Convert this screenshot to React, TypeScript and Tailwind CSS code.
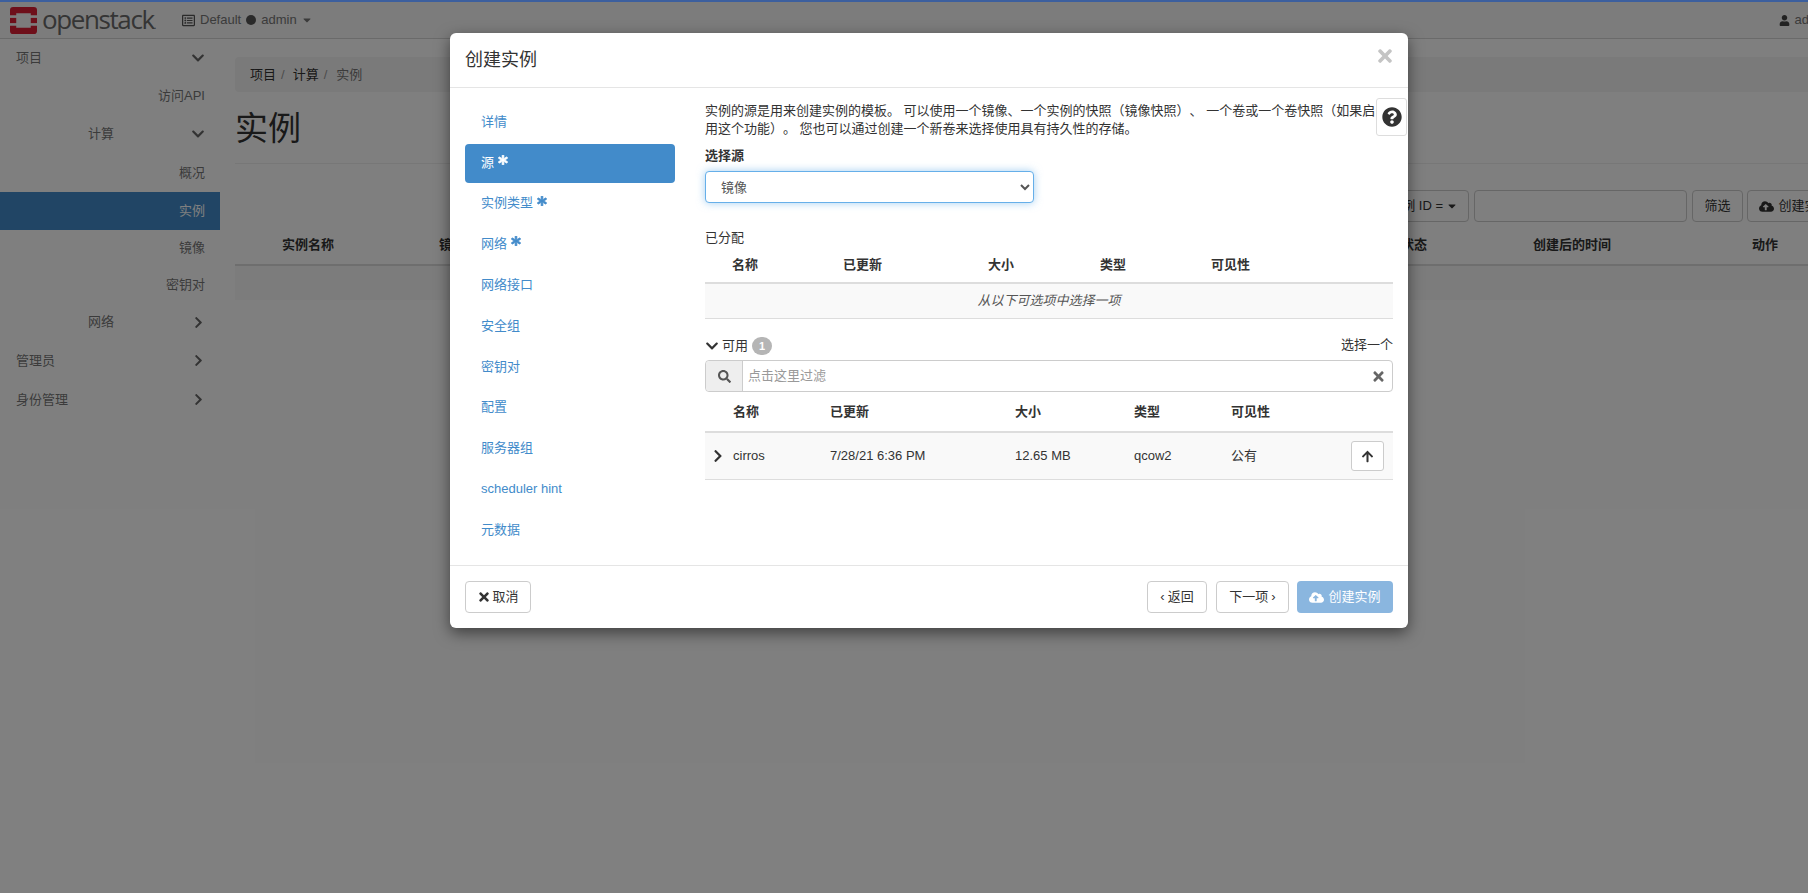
import React from 'react';
import {
  FaArrowUp,
  FaAsterisk,
  FaCaretDown,
  FaChevronDown,
  FaChevronRight,
  FaCloudUploadAlt,
  FaQuestionCircle,
  FaRegListAlt,
  FaSearch,
  FaTimes,
  FaUser,
} from 'react-icons/fa';

const Logo = () => (
  <svg viewBox="0 0 26 26" className="w-[27px] h-[27px] shrink-0" fill="#dc1e35">
    <path d="M0 8V3a3 3 0 0 1 3-3h20a3 3 0 0 1 3 3v5h-6V6H6v2z" />
    <path d="M0 18v5a3 3 0 0 0 3 3h20a3 3 0 0 0 3-3v-5h-6v2H6v-2z" />
    <rect x="0" y="10.5" width="6" height="5" />
    <rect x="20" y="10.5" width="6" height="5" />
  </svg>
);

const Navbar = () => (
  <div className="h-[37px] flex items-center bg-[#f8f8f8] border-b border-[#d4d4d4] text-[13px] text-[#777]">
    <div className="flex items-center pl-[10px] w-[182px] shrink-0">
      <Logo />
      <span className="ml-[5px] font-['Open_Sans',sans-serif] font-medium text-[26px] leading-none tracking-[-1.4px] text-[#6a6a6a] pb-[3px]">
        openstack<span className="text-[10px]">.</span>
      </span>
    </div>
    <FaRegListAlt className="text-[13px] text-[#555]" />
    <span className="ml-[5px]">Default</span>
    <span className="ml-[5px] w-[10px] h-[10px] rounded-full bg-[#555]" />
    <span className="ml-[5px]">admin</span>
    <FaCaretDown className="ml-[4px] text-[12px]" />
    <div className="ml-auto flex items-center gap-[5px] mr-[-4px]">
      <FaUser className="text-[11px] text-[#444]" />
      <span>admin</span>
      <FaCaretDown className="text-[12px]" />
    </div>
  </div>
);

const Sidebar = () => (
  <div className="w-[220px] shrink-0 text-[13px] text-[#777]">
    <div className="h-[38px] pl-4 pr-[15px] flex items-center justify-between">
      <span>项目</span>
      <FaChevronDown className="text-[14px] text-[#666]" />
    </div>
    <div className="h-[38px] pr-[15px] flex items-center justify-end">访问API</div>
    <div className="h-[38px] pl-[88px] pr-[15px] flex items-center justify-between">
      <span>计算</span>
      <FaChevronDown className="text-[14px] text-[#666]" />
    </div>
    <div className="h-[39px] pr-[15px] flex items-center justify-end">概况</div>
    <div className="h-[38px] pr-[15px] flex items-center justify-end bg-[#428bca] text-white">实例</div>
    <div className="h-[36px] pr-[15px] flex items-center justify-end">镜像</div>
    <div className="h-[37px] pr-[15px] flex items-center justify-end">密钥对</div>
    <div className="h-[38px] pl-[88px] pr-[15px] flex items-center justify-between">
      <span>网络</span>
      <FaChevronRight className="text-[13px] text-[#666]" />
    </div>
    <div className="h-[39px] pl-4 pr-[15px] flex items-center justify-between">
      <span>管理员</span>
      <FaChevronRight className="text-[13px] text-[#666]" />
    </div>
    <div className="h-[39px] pl-4 pr-[15px] flex items-center justify-between">
      <span>身份管理</span>
      <FaChevronRight className="text-[13px] text-[#666]" />
    </div>
  </div>
);

const PageContent = () => (
  <div className="flex-1 pl-[15px] text-[13px] text-[#333]">
    <div className="mt-[18px] h-[35px] pl-[15px] flex items-center bg-[#f5f5f5] rounded-[4px]">
      <span>项目</span>
      <span className="mx-[5px] text-[#999]">/</span>
      <span className="ml-[3px]">计算</span>
      <span className="mx-[5px] text-[#999]">/</span>
      <span className="ml-[4px] text-[#777]">实例</span>
    </div>
    <div className="h-[72px] pt-[2px] flex items-center border-b border-[#eee] text-[33px] leading-none">实例</div>
    <div className="mt-[26px] h-[32px] flex justify-end">
      <div className="w-[110px] flex items-center justify-end gap-[3px] pr-[10px] border border-[#ccc] rounded-[4px]">
        <span>实例 ID =</span>
        <FaCaretDown className="text-[12px]" />
      </div>
      <div className="ml-[5px] w-[213px] border border-[#ccc] rounded-[4px] bg-white" />
      <div className="ml-[5px] w-[51px] flex items-center justify-center border border-[#ccc] rounded-[4px]">筛选</div>
      <div className="ml-[4px] w-[96px] flex items-center justify-center gap-[4px] border border-[#ccc] rounded-[4px]">
        <FaCloudUploadAlt className="text-[15px]" />
        <span>创建实例</span>
      </div>
    </div>
    <div className="h-[44px] pt-[4px] grid grid-cols-[47px_157px_936px_158px_219px_1fr] items-center border-b-2 border-[#ddd] font-bold">
      <span />
      <span>实例名称</span>
      <span>镜像名称</span>
      <span>电源状态</span>
      <span>创建后的时间</span>
      <span>动作</span>
    </div>
    <div className="h-[34px] bg-[#f9f9f9]" />
  </div>
);

const steps = ['详情', '源', '实例类型', '网络', '网络接口', '安全组', '密钥对', '配置', '服务器组', 'scheduler hint', '元数据'];
const requiredSteps = ['源', '实例类型', '网络'];

const StepNav = () => (
  <div className="w-[210px] shrink-0 pt-[15px] flex flex-col gap-[1.8px] text-[13px]">
    {steps.map((step) => (
      <div
        key={step}
        className={
          step === '源'
            ? 'h-[39px] pl-4 pb-[2px] flex items-center rounded-[4px] bg-[#428bca] text-white'
            : 'h-[39px] pl-4 pb-[2px] flex items-center text-[#428bca]'
        }
      >
        <span>{step}</span>
        {requiredSteps.includes(step) && (
          <FaAsterisk stroke="currentColor" strokeWidth={40} className="ml-[4px] mb-[5px] text-[10px]" />
        )}
      </div>
    ))}
  </div>
);

const SourcePane = () => (
  <div className="relative ml-[30px] w-[688px] pt-[14px] text-[13px] leading-[18px] text-[#333]">
    <p className="whitespace-nowrap">
      实例的源是用来创建实例的模板。 可以使用一个镜像、一个实例的快照（镜像快照）、 一个卷或一个卷快照（如果启
      <br />
      用这个功能）。 您也可以通过创建一个新卷来选择使用具有持久性的存储。
    </p>
    <div className="mt-[9px] font-bold">选择源</div>
    <select className="mt-[6px] w-[329px] h-[32px] pl-[11px] bg-white text-[#555] border border-[#66afe9] rounded-[4px] shadow-[0_0_8px_rgba(102,175,233,0.6)] outline-none">
      <option>镜像</option>
    </select>
    <div className="mt-[26px]">已分配</div>
    <div className="h-[37px] grid grid-cols-[27px_111px_145px_112px_111px_1fr] items-center border-b-2 border-[#ddd] font-bold">
      <span />
      <span>名称</span>
      <span>已更新</span>
      <span>大小</span>
      <span>类型</span>
      <span>可见性</span>
    </div>
    <div className="h-[35px] flex items-center justify-center bg-[#f9f9f9] border-b border-[#ddd] italic text-[#555]">
      从以下可选项中选择一项
    </div>
    <div className="h-[41px] flex items-center justify-between pt-[12px]">
      <div className="flex items-center">
        <FaChevronDown className="text-[14px]" />
        <span className="ml-[3px]">可用</span>
        <span className="ml-[4px] w-[20px] h-[18px] flex items-center justify-center rounded-full bg-[#b5b5b5] text-white text-[11px] font-bold">
          1
        </span>
      </div>
      <span className="pb-[2px]">选择一个</span>
    </div>
    <div className="h-[32px] flex items-center border border-[#ccc] rounded-[4px]">
      <div className="w-[37px] h-full flex items-center justify-center bg-[#eee] border-r border-[#ccc] rounded-l-[4px] text-[#555]">
        <FaSearch className="text-[13px]" />
      </div>
      <span className="ml-[5px] text-[#999]">点击这里过滤</span>
      <FaTimes className="ml-auto mr-[6px] text-[15px] text-[#666]" />
    </div>
    <div className="h-[41px] pt-[1px] grid grid-cols-[28px_97px_185px_119px_97px_1fr] items-center border-b-2 border-[#ddd] font-bold">
      <span />
      <span>名称</span>
      <span>已更新</span>
      <span>大小</span>
      <span>类型</span>
      <span>可见性</span>
    </div>
    <div className="h-[47px] grid grid-cols-[28px_97px_185px_119px_97px_1fr] items-center bg-[#f9f9f9] border-b border-[#ddd]">
      <FaChevronRight className="ml-[6px] text-[14px]" />
      <span>cirros</span>
      <span>7/28/21 6:36 PM</span>
      <span>12.65 MB</span>
      <span>qcow2</span>
      <div className="flex items-center justify-between pr-[9px]">
        <span>公有</span>
        <div className="w-[33px] h-[30px] flex items-center justify-center bg-white border border-[#ccc] rounded-[3px]">
          <FaArrowUp className="text-[13px]" />
        </div>
      </div>
    </div>
    <div className="absolute left-[671px] top-[10px] w-[31px] h-[38px] flex items-center justify-center bg-white border border-[#ddd] rounded-[3px]">
      <FaQuestionCircle className="text-[20px]" />
    </div>
  </div>
);

const Modal = () => (
  <div className="w-[958px] h-[595px] flex flex-col bg-white rounded-[6px] shadow-[0_5px_15px_rgba(0,0,0,0.5)]">
    <div className="h-[55px] shrink-0 px-[15px] flex items-center justify-between border-b border-[#e5e5e5]">
      <span className="text-[18px] text-[#333]">创建实例</span>
      <FaTimes className="mr-[-2px] mb-[8px] text-[20px] text-[#c4c4c4]" />
    </div>
    <div className="flex-1 pl-[15px] flex">
      <StepNav />
      <SourcePane />
    </div>
    <div className="h-[63px] shrink-0 px-[15px] flex items-center border-t border-[#e5e5e5] text-[13px] text-[#333]">
      <div className="w-[66px] h-[32px] flex items-center justify-center gap-[1px] border border-[#ccc] rounded-[4px]">
        <FaTimes className="text-[14px]" />
        <span>取消</span>
      </div>
      <div className="ml-auto w-[60px] h-[32px] flex items-center justify-center gap-[3px] border border-[#ccc] rounded-[4px]">
        <span>‹</span>
        <span>返回</span>
      </div>
      <div className="ml-[9px] w-[73px] h-[32px] flex items-center justify-center gap-[3px] border border-[#ccc] rounded-[4px]">
        <span>下一项</span>
        <span>›</span>
      </div>
      <div className="ml-[8px] w-[96px] h-[32px] flex items-center justify-center gap-[4px] bg-[#8ab6df] rounded-[4px] text-white">
        <FaCloudUploadAlt className="text-[15px]" />
        <span>创建实例</span>
      </div>
    </div>
  </div>
);

export default function App() {
  return (
    <div className="relative w-full h-[893px] overflow-hidden bg-white [text-spacing-trim:space-all] font-['Liberation_Sans','Noto_Sans_CJK_SC',sans-serif]">
      <div className="w-[1843px]">
        <div className="h-[2px] bg-[#76bcff]" />
        <Navbar />
        <div className="flex">
          <Sidebar />
          <PageContent />
        </div>
      </div>
      <div className="absolute inset-0 bg-black/50 pl-[450px] pt-[33px]">
        <Modal />
      </div>
      <div className="absolute left-0 top-0 w-full h-[2px] bg-[#3c5f9e]" />
    </div>
  );
}
